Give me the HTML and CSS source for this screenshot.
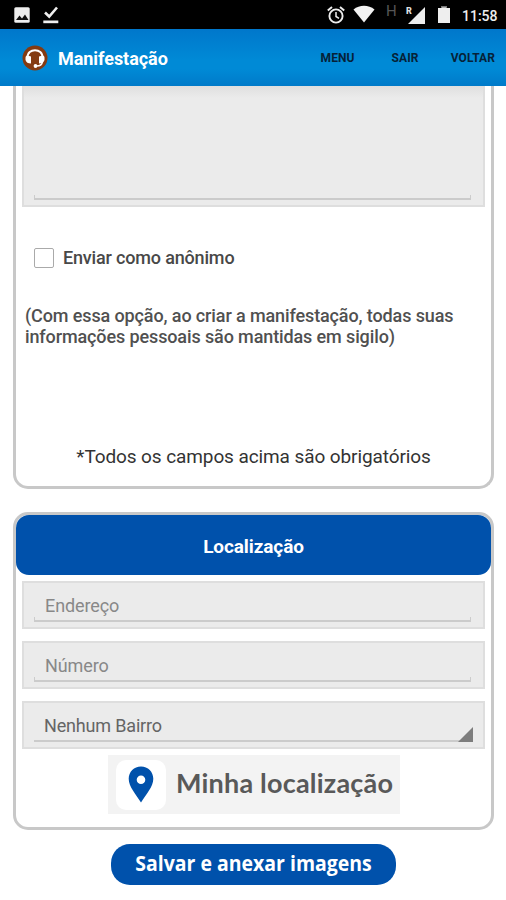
FILE: index.html
```html
<!DOCTYPE html>
<html lang="pt-BR">
<head>
<meta charset="utf-8">
<title>Manifestação</title>
<link rel="stylesheet" href="styles.css">
</head>
<body>
<div class="statusbar">
  <svg class="s-image" width="16" height="16" viewBox="0 0 16 16"><rect x=".3" y=".3" width="15.4" height="15.4" rx="1.5" fill="#eee"/><path d="M2 13l3.500-4.500 2.500 3L11 7.500l3.500 5.500z" fill="#111"/></svg>
  <svg class="s-check" width="16" height="18" viewBox="0 0 16 18"><path d="M2 6.500l4.200 4L14 1.500" fill="none" stroke="#eee" stroke-width="2.600"/><rect x=".3" y="14.500" width="15" height="2.700" fill="#eee"/></svg>
  <span class="spacer"></span>
  <svg class="s-alarm" width="18" height="18" viewBox="0 0 18 18" fill="none" stroke="#eee"><circle cx="9" cy="10" r="6.600" stroke-width="1.900"/><path d="M.8 4.500L5 1M17.200 4.500L13 1" stroke-width="2"/><path d="M9 6v4.500l3 1.800" stroke-width="1.500"/></svg>
  <svg class="s-wifi" width="22" height="18" viewBox="0 0 22 18"><path d="M.5 4.500C6.500-.5 15.500-.5 21.500 4.500L11 17.500z" fill="#f2f2f2"/></svg>
  <span class="net">H</span>
  <span class="signal"><span class="roam">R</span><svg width="18" height="17" viewBox="0 0 18 17"><path d="M18 0v17H1z" fill="#eee"/></svg></span>
  <svg class="s-battery" width="12" height="17" viewBox="0 0 12 17"><path d="M3.500 0h5v2H12v15H0V2h3.500z" fill="#eee"/><path d="M3 0h6v1.500H3z" fill="#777"/></svg>
  <span class="clock">11:58</span>
</div>
<header class="appbar">
  <svg class="logo" width="26" height="26" viewBox="0 0 26 26"><circle cx="13" cy="13" r="12.500" fill="#843b12"/><path d="M5.500 13C5 2.500 21 2.500 20.500 13" fill="none" stroke="#fff" stroke-width="2"/><path d="M3.500 12.500q0-2 2-2l3.500 1v7Q4.500 18.500 3.500 15zM22.500 12.500q0-2-2-2l-3.500 1v7Q21.500 18.500 22.500 15z" fill="#fff"/><path d="M20.500 17q-1 4-5.500 4" fill="none" stroke="#fff" stroke-width="1.400"/><circle cx="13.500" cy="21" r="1.900" fill="#fff"/></svg>
  <h1 class="title">Manifestação</h1>
  <nav class="menu"><span class="m1">MENU</span><span class="m2">SAIR</span><span class="m3">VOLTAR</span></nav>
</header>
<main>
  <section class="card report">
    <div class="field area"><div class="line"></div></div>
    <label class="anon"><span class="box"></span><span>Enviar como anônimo</span></label>
    <p class="note">(Com essa opção, ao criar a manifestação, todas suas<br>informações pessoais são mantidas em sigilo)</p>
    <p class="required">*Todos os campos acima são obrigatórios</p>
  </section>
  <section class="card place">
    <h2 class="heading">Localização</h2>
    <div class="field"><div class="line">Endereço</div></div>
    <div class="field"><div class="line num">Número</div></div>
    <div class="field select"><div class="line">Nenhum Bairro</div><svg class="tri" width="15" height="15" viewBox="0 0 15 15"><path d="M15 0v15H0z" fill="#7d7d7d"/></svg></div>
    <div class="locate"><span class="pinbox"><svg width="26" height="37" viewBox="0 0 26 37"><path fill="#0051ab" fill-rule="evenodd" d="M13 .5C6 .5.700 5.800.700 12.700.700 21 8 28 13 36.500 18 28 25.300 21 25.300 12.700 25.300 5.800 20 .5 13 .5zM13 9.500a4.300 4.300 0 1 1 0 8.600 4.300 4.300 0 0 1 0-8.600z"/></svg></span><span class="loctext">Minha localização</span></div>
  </section>
  <div class="save"><span>Salvar e anexar imagens</span></div>
</main>
</body>
</html>
```
FILE: styles.css
```css
* { box-sizing: border-box; }
body { margin: 0; width: 506px; height: 900px; overflow: hidden; background: #fff; font-family: Roboto, sans-serif; display: flex; flex-direction: column; }
h1, h2, p { margin: 0; }
svg { display: block; flex: none; }
.statusbar { height: 29px; flex: none; background: #000; display: flex; align-items: center; padding: 0 8px 0 14px; }
.s-check { margin-left: 13px; }
.spacer { flex: 1; }
.s-alarm { margin-right: -1px; }
.s-wifi { margin-left: 9px; margin-top: -1px; }
.net { margin-left: 13px; width: 12px; font-size: 15px; line-height: 16px; color: #555; margin-top: -8px; }
.signal { margin-left: 8px; width: 19px; height: 18px; position: relative; display: flex; justify-content: flex-end; align-items: flex-end; }
.roam { position: absolute; left: 0; top: 0; font-size: 9px; line-height: 10px; font-weight: 900; color: #ddd; }
.s-battery { margin-left: 13px; }
.clock { margin-left: 12px; width: 36px; font-size: 14px; font-weight: 500; color: #eee; white-space: nowrap; margin-top: 2px; }
.s-alarm, .s-wifi { transform: translateX(2px); }
.appbar { height: 57px; flex: none; display: flex; align-items: center; padding-left: 22px; background: linear-gradient(#0077cb, #008ad6 55%, #008ad6 70%, #007ac9); }
.title { margin-left: 10px; font-size: 18px; letter-spacing: -.05px; font-weight: 700; color: #fff; margin-top: 2px; }
.menu { margin-left: auto; display: flex; padding-right: 11px; font-size: 12px; font-weight: 700; color: #062238; letter-spacing: .1px; }
.m2 { margin-left: 37px; }
.m3 { margin-left: 32px; }
main { flex: 1; display: flex; flex-direction: column; padding: 0 12px 0 13px; }
.card { border: 3px solid #c8c8c8; border-radius: 15px; background: #fff; flex: none; }
.report { height: 403px; border-top: 0; border-radius: 0 0 15px 15px; padding: 0 6px; }
.field { height: 48px; margin: 0 6px 12px; border: 2px solid #dedede; background: #ebebeb; padding: 0 12px 5px 10px; display: flex; align-items: flex-end; position: relative; }
.line { flex: 1; height: 37px; border-bottom: 2px solid #cbcbcb; padding-left: 11px; font-size: 18px; line-height: 41px; letter-spacing: -.1px; color: #888; }
.area { height: 121px; margin: 0; border-top: 0; background: linear-gradient(#dfdfdf, #ebebeb 12px); }
.field .line { position: relative; }
.field .line::before, .field .line::after { content: ""; position: absolute; bottom: 0; width: 1px; height: 3px; background: #ccc; }
.field .line::before { left: 0; }
.field .line::after { right: 0; }
.anon { margin: 40px 0 0 12px; height: 21px; display: flex; align-items: center; gap: 9px; font-size: 18px; letter-spacing: -.17px; font-weight: 500; color: #484848; }
.box { width: 20px; height: 20px; border: 1px solid #aaa; border-radius: 2px; }
.note { margin: 37px 0 0 3px; font-size: 18px; letter-spacing: -.12px; line-height: 21px; font-weight: 500; color: #505050; white-space: nowrap; }
.required { margin-top: 98px; line-height: 24px; font-size: 19px; letter-spacing: -.1px; color: #333; text-align: center; white-space: nowrap; }
.place { margin-top: 23px; height: 318px; display: flex; flex-direction: column; }
.heading { flex: none; height: 60px; border-radius: 13px; background: #0051ab; color: #fff; font-size: 19px; letter-spacing: -.1px; line-height: 63px; text-align: center; margin-bottom: 6px; }
.select { margin-bottom: 6px; }
.select .line { color: #656565; padding-left: 10px; letter-spacing: -.17px; }
.select .line::before, .select .line::after { display: none; }
.tri { position: absolute; right: 10px; bottom: 5px; }
.locate { width: 292px; height: 59px; margin-left: 92px; background: #f3f3f3; display: flex; align-items: center; padding-left: 8px; }
.pinbox { width: 50px; height: 50px; border-radius: 10px; background: #fff; display: flex; align-items: center; justify-content: center; }
.loctext { margin-left: 10px; font: 700 27px Lato, sans-serif; letter-spacing: .2px; color: #595959; white-space: nowrap; margin-top: -5px; }
.save { align-self: center; width: 285px; height: 41px; margin-top: 14px; border-radius: 19px; background: #0051ab; color: #fff; font: 700 21px/38px "Open Sans", sans-serif; text-align: center; white-space: nowrap; }
.save span { display: inline-block; transform: scaleX(.927); }
```
